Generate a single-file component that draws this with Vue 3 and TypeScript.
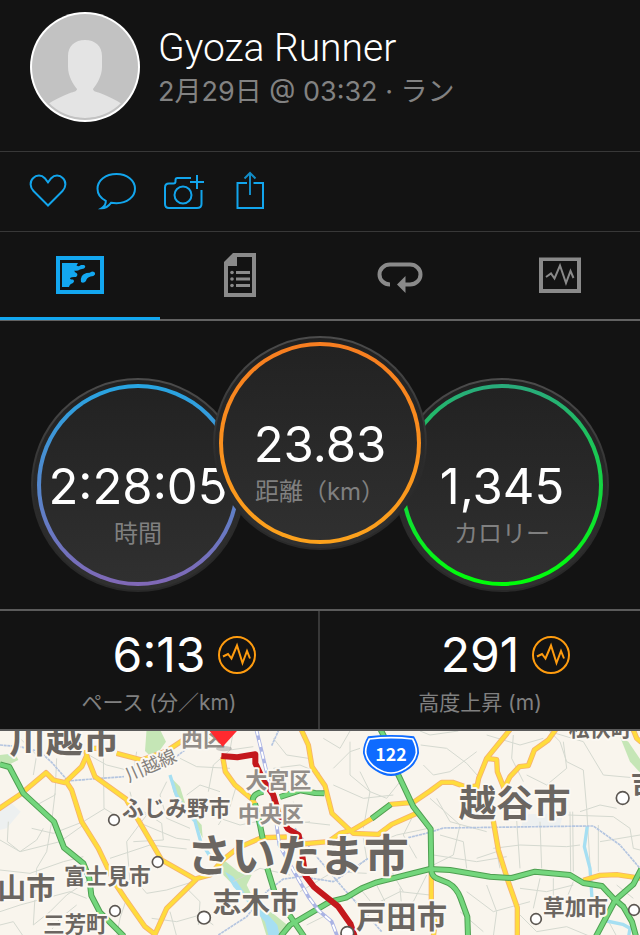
<script setup lang="ts">
import { ref } from 'vue'

interface Dial {
  id: string
  value: string
  label: string
}

interface Stat {
  value: string
  label: string
}

interface Place {
  name: string
  x: number
  y: number
  size: number
  kind: 'city' | 'ward' | 'line'
  angle?: number
}

interface Marker {
  x: number
  y: number
  r: number
}

const dials: Dial[] = [
  { id: 'time', value: '2:28:05', label: '時間' },
  { id: 'distance', value: '23.83', label: '距離（km）' },
  { id: 'calories', value: '1,345', label: 'カロリー' },
]

const stats: Stat[] = [
  { value: '6:13', label: 'ペース (分／km)' },
  { value: '291', label: '高度上昇 (m)' },
]

const tabs = ['マップ', '詳細', 'ラップ', 'グラフ']
const activeTab = ref(0)

const greenRoads: string[] = [
  'M0 118L28 126L70 205L162 290L192 368L250 415L268 460L274 512L300 562L372 634',
  'M1140 10L1160 50L1195 150L1240 245L1292 312L1294 435Q1294 452 1310 460L1345 474Q1370 488 1382 520L1402 575L1404 634',
  'M842 634L870 600L900 583L990 530L1038 518L1085 490L1130 472L1290 432L1350 435L1470 455L1535 459L1605 440L1710 450L1750 474L1806 483L1840 520L1870 545L1896 590L1908 634',
  'M1788 634L1846 525L1900 478L1924 432',
  'M758 225Q760 205 790 200',
  'M765 235L780 300L788 340',
  'M802 430L825 505',
  'M868 570L912 634',
  'M840 216L900 196L945 204L973 205',
]

const yellowRoads: string[] = [
  'M-4 252L65 205L138 143L160 165L195 173L245 125L260 92L258 75',
  'M260 92L285 155L378 222L412 280L485 405L585 462L630 450L668 405L715 368L785 338L860 336',
  'M200 172L215 195L245 290L295 370L345 475L375 520L435 605L465 628L500 550L590 462',
  'M350 85L425 105L500 78L550 45L640 40',
  'M258 70L300 70',
  'M902 10L925 60L936 125L975 182L996 265L1060 325L1135 328L1175 298L1252 264',
  'M668 95L676 140L705 180L758 224L770 250',
  'M905 357L985 350L1020 325L1058 315L1115 281L1172 238L1240 232L1290 198L1325 172L1358 172L1400 187L1435 182',
  'M1530 14L1460 100L1436 160L1430 190M1460 100L1490 104L1492 140L1512 190',
  'M1667 14L1645 45L1603 75L1585 122L1558 125L1530 155L1510 195',
  'M1480 288L1495 375L1524 468L1552 548L1552 634',
  'M1294 440L1294 560L1306 590L1300 634',
  'M1750 466L1800 451L1850 449L1924 460',
  'M1898 10L1910 40L1924 52',
]

const minorRoads: string[] = [
  'M165 205L155 290L140 380L110 430L100 600M95 310L160 325L250 290L315 250M310 90L312 250L345 270',
  'M25 290L22 350L60 380L180 350L250 300M0 345L60 380L110 345L130 310M0 435L90 445L190 410L250 395',
  'M170 100L165 210L110 240M60 40L110 90L100 150M240 75L320 120L400 140L410 80',
  'M390 200L400 240L485 295L490 345L400 350M410 290L530 340L570 345M380 240L440 270L380 350L390 470',
  'M330 400L450 360L560 372M260 470L200 510L150 560L100 600M0 560L60 540L210 500L260 520',
  'M410 470L440 505L500 495L580 470M380 520L360 580L350 634M230 540L180 580L140 634M0 600L40 590L70 634',
  'M500 170L480 210L500 280L570 310M540 100L590 125L690 130M560 210L600 180L660 200',
  'M455 580L530 590L600 570L640 600M510 560L530 634M560 490L600 530L595 600',
  'M700 18L690 75L640 120L625 200M690 75L760 65M655 300L690 245L710 180M630 270L720 300L770 290',
  'M820 40L860 90L925 100M820 130L900 120L960 145M970 40L1020 70L1050 18M1000 130L1050 80L1080 70',
  'M1050 50L1050 150L1110 200L1090 310M1000 180L1090 220L1180 210M1080 140L1110 200L1160 220L1200 170',
  'M1140 350L1190 330L1285 310M1090 340L1100 400L1060 440M1150 360L1180 450L1210 500M1240 270L1210 330L1250 400',
  'M900 500L1000 440L1100 445M880 230L900 290L990 300M830 260L860 300L930 290M700 470L780 430L870 450',
  'M1080 490L1120 540L1200 500L1290 510M1130 480L1170 560L1240 530L1280 450M1200 490L1210 600M920 600L980 570',
  'M1262 60L1340 70L1400 115L1440 160M1260 18L1290 30L1375 18M1270 120L1300 150L1350 140L1430 80',
  'M1290 220L1380 300L1360 390L1300 420M1320 330L1390 350L1400 430M1310 220L1350 290L1460 320M1300 390L1430 410L1520 395',
  'M1540 30L1535 100L1570 170M1460 30L1560 60L1630 40M1580 150L1640 180L1700 130L1690 50',
  'M1640 10L1680 50L1700 110L1750 135L1760 250L1770 420M1740 260L1800 240L1850 250M1650 20L1750 50L1810 150L1920 160',
  'M1710 260L1712 440M1718 260L1720 440M1795 300L1795 440M1705 270L1840 275L1890 310L1900 370L1920 375',
  'M1480 370L1560 360L1700 365L1740 360M1550 285L1560 430M1620 290L1625 430M1430 400L1490 380L1500 430M1800 350L1920 330',
  'M1460 480L1490 560L1480 634M1400 500L1480 560L1590 530M1560 490L1640 500L1720 480M1660 460L1660 520M1380 560L1450 620',
  'M1560 570L1610 620L1700 605L1770 634M1720 470L1700 520M1620 460L1600 550M1850 480L1900 520M1810 560L1850 634',
]

const railLines: string[] = [
  'M0 60L60 65L120 80L155 112L204 168L300 160L372 155M522 100L555 75',
  'M815 62L835 18M655 630L740 575L800 500L850 462L905 455L1000 470L1105 400',
  'M885 310L950 395L1030 490L1080 545L1145 620',
  'M1225 338L1290 322L1330 309L1760 303L1780 303L1860 360L1920 430',
]

const mainRail = 'M768 10L784 75L802 150L822 240L838 360L870 418L925 515L955 556L995 590L1012 634'

const water: string[] = [
  'M510 150L528 208L560 262L585 288L602 350L628 390',
  'M1762 303L1753 365L1770 430L1776 520',
  'M1820 588L1868 598L1890 610L1886 634',
]

const route = 'M664 93L712 97L766 88L766 115L792 170L820 210L836 265L864 312L896 330L908 400L916 452L942 486L1015 545L1052 598L1064 634'

const markers: Marker[] = [
  { x: 342, y: 285, r: 16 },
  { x: 473, y: 411, r: 16 },
  { x: 345, y: 558, r: 16 },
  { x: 612, y: 578, r: 19 },
  { x: 1042, y: 624, r: 19 },
  { x: 1868, y: 219, r: 19 },
  { x: 1608, y: 582, r: 16 },
  { x: 1902, y: 555, r: 16 },
]

const places: Place[] = [
  { name: '川越市', x: 28, y: 84, size: 110, kind: 'city' },
  { name: '川越線', x: 386, y: 172, size: 54, kind: 'line', angle: -24 },
  { name: '西区', x: 543, y: 63, size: 66, kind: 'ward' },
  { name: 'ふじみ野市', x: 366, y: 272, size: 65, kind: 'city' },
  { name: '富士見市', x: 192, y: 477, size: 65, kind: 'city' },
  { name: '山市', x: -8, y: 522, size: 87, kind: 'city' },
  { name: '三芳町', x: 130, y: 622, size: 64, kind: 'city' },
  { name: '大宮区', x: 736, y: 190, size: 66, kind: 'ward' },
  { name: '中央区', x: 713, y: 291, size: 66, kind: 'ward' },
  { name: 'さいたま市', x: 560, y: 442, size: 134, kind: 'city' },
  { name: '志木市', x: 638, y: 565, size: 86, kind: 'city' },
  { name: '戸田市', x: 1068, y: 609, size: 91, kind: 'city' },
  { name: '越谷市', x: 1376, y: 277, size: 112, kind: 'city' },
  { name: '松伏町', x: 1706, y: 34, size: 63, kind: 'city' },
  { name: '吉', x: 1892, y: 203, size: 80, kind: 'city' },
  { name: '草加市', x: 1629, y: 570, size: 65, kind: 'city' },
]
</script>

<template>
  <main class="activity">
    <header class="profile">
      <svg class="avatar" viewBox="0 0 110 110" role="img" aria-label="Gyoza Runner">
        <defs>
          <clipPath id="avatar-clip"><circle cx="55" cy="55" r="51" /></clipPath>
        </defs>
        <circle cx="55" cy="55" r="55" fill="#fff" />
        <circle cx="55" cy="55" r="53" fill="#c2c2c2" />
        <path
          clip-path="url(#avatar-clip)"
          fill="#e4e4e4"
          d="M55 28C45 28 38 34 38 44V55C38 64 43 72 47 77C47 79 44 80 40 81C32 84 24 88 18 92C28 102 41 106 55 106S82 102 92 92C86 88 78 84 70 81C66 80 63 79 63 77C67 72 72 64 72 55V44C72 34 65 28 55 28Z"
        />
      </svg>
      <div class="who">
        <h1 class="name">Gyoza Runner</h1>
        <p class="when">2月29日 @ 03:32 · ラン</p>
      </div>
    </header>

    <div class="actions">
      <button type="button" class="action" aria-label="いいね">
        <svg viewBox="0 0 40 40">
          <path d="M20 34.500L5.500 20C2 16.500 1.500 10.500 5 7.200C8.500 3.700 13.500 3.700 16.800 7.200L20 11.300L23.200 7.200C26.500 3.700 31.500 3.700 35 7.200C38.500 10.500 38 16.500 34.500 20Z" />
        </svg>
      </button>
      <button type="button" class="action" aria-label="コメント">
        <svg viewBox="0 0 40 40">
          <path d="M15 31.800C17 32.100 18.500 32.200 20.500 32.200C31 32.200 39 26 39 17.800C39 9.400 31 3 20.500 3C9.500 3 1.500 9.400 1.500 17.800C1.500 23 4.500 27.200 9.800 29.800C10 33 8.500 35.500 5.500 37.300C9.500 37.300 12.500 35.200 15 31.800Z" />
        </svg>
      </button>
      <button type="button" class="action" aria-label="写真を追加">
        <svg viewBox="0 0 40 40">
          <path d="M27 7H13.500Q11.500 7 11.500 9V10.500Q11.500 12.500 9.500 12.500H5Q1 12.500 1 16.500V33Q1 37 5 37H33Q37.500 37 37.500 33V19M26 11H40M33 4V18" />
          <circle cx="19" cy="24" r="8.500" />
        </svg>
      </button>
      <button type="button" class="action" aria-label="共有">
        <svg viewBox="0 0 40 40">
          <path d="M15 12H5.500V37H31V12H21.500" />
          <path class="arrow" d="M18 24V2M12.500 7.500L18 2L23.500 7.500" />
        </svg>
      </button>
    </div>

    <nav class="tabs" role="tablist">
      <button
        v-for="(tab, i) in tabs"
        :key="tab"
        type="button"
        role="tab"
        class="tab"
        :class="{ active: i === activeTab }"
        :aria-label="tab"
        :aria-selected="i === activeTab"
        @click="activeTab = i"
      >
        <svg v-if="i === 0" viewBox="0 0 48 48">
          <path fill-rule="evenodd" d="M0 5H48V43H0ZM4 9V39H44V9Z" />
          <path d="M6 12H22L20.500 14.500Q23 16 25 14H28Q30.500 15.500 28 17.500L24 18.500Q21 20.500 18.500 19.500Q18 21 20.500 22Q22.500 24 20 26Q16 25.500 14 27Q14 28.500 17 28.500Q19 30 17 32Q13.500 33 13 36H6Z" />
          <path d="M25 31Q24 23.500 30.500 22Q34 22 36 20.500Q39.500 20.500 39 23.500Q38 25.500 34.500 25.500Q30.500 26.500 30 30Q27.500 33 25 31Z" />
        </svg>
        <svg v-else-if="i === 1" viewBox="0 0 48 48">
          <path fill-rule="evenodd" d="M17 2H40V46H8V11ZM21 6V15H12V42H36V6Z" />
          <path d="M20 20H34V23H20ZM20 26.500H34V29.500H20ZM20 33H34V36H20Z" />
          <circle cx="16" cy="21.500" r="1.800" /><circle cx="16" cy="28" r="1.800" /><circle cx="16" cy="34.500" r="1.800" />
        </svg>
        <svg v-else-if="i === 2" viewBox="0 0 48 48">
          <path class="line thick" d="M14 33.500C8 33.500 3.500 29 3.500 23.500S8 13.500 14 13.500H34C40 13.500 44.500 18 44.500 23.500S40 33.500 34 33.500H26" />
          <path d="M21 33.500L29.500 25V42Z" />
        </svg>
        <svg v-else viewBox="0 0 48 48">
          <path fill-rule="evenodd" d="M3 6.500H45V42H3ZM7 10V38H41V10Z" />
          <path class="line" d="M10 26L15 22.500L18.500 27.500L24 14.500L30 32L34.500 20L37.500 27" />
        </svg>
      </button>
    </nav>

    <section class="dials">
      <div v-for="dial in dials" :key="dial.id" class="dial" :class="dial.id">
        <div class="ring">
          <strong class="dial-value">{{ dial.value }}</strong>
          <span class="dial-label">{{ dial.label }}</span>
        </div>
      </div>
    </section>

    <section class="stats">
      <div v-for="stat in stats" :key="stat.label" class="stat">
        <div class="reading">
          <strong class="stat-value">{{ stat.value }}</strong>
          <button type="button" class="graph" aria-label="グラフを表示">
            <svg viewBox="0 0 38 38">
              <circle cx="19" cy="19" r="18" />
              <path d="M5 20.500L10 18L13.500 22.500L19 9.500L24.500 27L29 15L32 22.500" />
            </svg>
          </button>
        </div>
        <span class="stat-label">{{ stat.label }}</span>
      </div>
    </section>

    <svg class="map" viewBox="0 18 1920 612" role="img" aria-label="ルートマップ">
      <rect x="0" y="0" width="1920" height="640" fill="#f9f5ed" />

      <g class="land">
        <path fill="#edf0f0" d="M0 240L30 230L62 260L20 310L0 315ZM1570 268L1690 265L1680 303L1565 303Z" />
        <path fill="#c5e6b6" d="M440 10H478L498 50L480 75L450 92L435 78ZM0 90L45 85L55 105L20 122L0 115ZM510 155L540 185L560 250L605 300L608 340L585 290L545 245L520 200Z" />
        <path fill="#c5e6b6" d="M665 400L715 440L755 450L740 480L765 530L825 570L862 600L845 634H800L780 570L720 500L670 450Z" />
        <path fill="#c5e6b6" d="M1860 35L1885 50L1922 105V145L1890 110Z" />
        <path fill="#a6dff2" d="M675 440L700 455L738 510L760 520L805 570L832 600L840 634H806L795 590L755 545L700 485Z" />
      </g>
      <g class="minor"><path v-for="d in minorRoads" :key="d" :d="d" /></g>
      <g class="water"><path v-for="d in water" :key="d" :d="d" /></g>
      <g class="rail"><path v-for="d in railLines" :key="d" :d="d" /></g>
      <g class="yellow-case"><path v-for="d in yellowRoads" :key="d" :d="d" /></g>
      <g class="yellow"><path v-for="d in yellowRoads" :key="d" :d="d" /></g>
      <g class="green-case"><path v-for="d in greenRoads" :key="d" :d="d" /><path d="M1115 281L1172 238" /></g>
      <g class="green"><path v-for="d in greenRoads" :key="d" :d="d" /><path d="M1115 281L1172 238" /></g>
      <path class="main-rail-case" :d="mainRail" />
      <path class="main-rail" :d="mainRail" />
      <path class="route" :d="route" />

      <circle v-for="m in markers" :key="`${m.x}-${m.y}`" class="marker" :cx="m.x" :cy="m.y" :r="m.r" />

      <text
        v-for="p in places"
        :key="p.name"
        :class="p.kind"
        :x="p.x"
        :y="p.y"
        :font-size="p.size"
        :transform="p.angle ? `rotate(${p.angle} ${p.x} ${p.y})` : undefined"
      >{{ p.name }}</text>

      <ellipse cx="672" cy="71" rx="24" ry="8" fill="#777" opacity=".35" />
      <path fill="#ff2a2f" d="M622 10H718L668 65Z" />

      <path fill="#0f6bff" d="M1104 34Q1173 26 1242 34Q1258 60 1257 85Q1250 120 1218 138Q1173 168 1128 138Q1096 120 1089 85Q1088 60 1104 34Z" />
      <path fill="none" stroke="#fff" stroke-width="5" d="M1108 42Q1173 34 1238 42Q1250 64 1249 84Q1243 114 1214 131Q1173 157 1132 131Q1103 114 1097 84Q1096 64 1108 42Z" />
      <text class="shield" x="1173" y="107" font-size="53">122</text>
    </svg>
  </main>
</template>

<style>
body {
  margin: 0;
  background: #131313;
}
</style>

<style scoped>
.activity {
  min-height: 100vh;
  overflow: hidden;
  background: #131313;
  color: #fff;
  font-family: Inter, "Noto Sans CJK JP", sans-serif;
}

button {
  padding: 0;
  border: 0;
  background: none;
  color: inherit;
  cursor: pointer;
}

svg {
  display: block;
}

.profile {
  display: flex;
  gap: 18px;
  padding: 12px 30px 29px;
  border-bottom: 1px solid #383838;
}

.avatar {
  flex: none;
  width: 110px;
  height: 110px;
}

.who {
  padding-top: 12px;
}

.name {
  margin: 0;
  font-family: Roboto, sans-serif;
  font-size: 39px;
  font-weight: 300;
  line-height: 48px;
}

.when {
  margin: 0;
  color: #828282;
  font-size: 27px;
  font-weight: 400;
  line-height: 40px;
}

.actions {
  display: flex;
  gap: 28px;
  padding: 19px 28px 20px;
  border-bottom: 1px solid #383838;
}

.action svg {
  width: 40px;
  height: 40px;
  fill: none;
  stroke: #12a5ec;
  stroke-width: 2;
}

.action .arrow {
  stroke: #128cc6;
}

.tabs {
  display: grid;
  grid-template-columns: repeat(4, 1fr);
  border-bottom: 2px solid #626262;
}

.tab {
  position: relative;
  display: flex;
  justify-content: center;
  padding: 19px 0 20px;
  color: #8a8a8a;
}

.tab.active {
  color: #13a7f0;
}

.tab.active::after {
  content: "";
  position: absolute;
  right: 0;
  bottom: -1px;
  left: 0;
  height: 3px;
  background: #13a7f0;
}

.tab svg {
  width: 48px;
  height: 48px;
  fill: currentColor;
}

.tab .line {
  fill: none;
  stroke: currentColor;
  stroke-width: 2;
}

.tab .thick {
  stroke-width: 4;
}

.dials {
  display: flex;
  justify-content: center;
  padding: 15px 0 17px;
}

.dial {
  box-sizing: border-box;
  flex: none;
  width: 214px;
  height: 214px;
  margin-top: 42px;
  padding: 4px;
  border: 2px solid transparent;
  border-radius: 50%;
  background:
    linear-gradient(#212121, #303030) padding-box,
    linear-gradient(#4c4c4c, #2b2b2b 60%, #292929) border-box;
}

.distance {
  z-index: 1;
  margin: 0 -32px 42px;
}

.ring {
  box-sizing: border-box;
  display: flex;
  flex-direction: column;
  align-items: center;
  width: 202px;
  height: 202px;
  padding-top: 69px;
  border: 4px solid transparent;
  border-radius: 50%;
  background:
    linear-gradient(#222, #303030) padding-box,
    linear-gradient(var(--from), var(--to)) border-box;
  white-space: nowrap;
}

.time {
  --from: #27a5e2;
  --to: #8168b6;
}

.distance {
  --from: #f77d20;
  --to: #fca21c;
}

.calories {
  --from: #29ab7c;
  --to: #00ff08;
}

.dial-value {
  font-size: 49px;
  font-weight: 400;
  line-height: 60px;
}

.dial-label {
  color: #808080;
  font-size: 24px;
  font-weight: 400;
  line-height: 34px;
}

.stats {
  display: grid;
  grid-template-columns: 1fr 1fr;
  border-top: 2px solid #5b5b5b;
  border-bottom: 2px solid #5b5b5b;
}

.stat {
  display: flex;
  flex-direction: column;
  align-items: center;
  padding: 15px 0 7px;
}

.stat:first-child {
  border-right: 2px solid #383838;
}

.reading {
  display: grid;
  grid-template-columns: 1fr auto 1fr;
  align-items: center;
  gap: 13px;
  width: 100%;
}

.stat-value {
  grid-column: 2;
  font-size: 48px;
  font-weight: 400;
  line-height: 58px;
}

.graph {
  justify-self: start;
}

.graph svg {
  width: 38px;
  height: 38px;
  fill: none;
  stroke: #ff9c0f;
  stroke-width: 2;
}

.stat-label {
  color: #808080;
  font-size: 21px;
  font-weight: 400;
  line-height: 38px;
}

.map {
  width: 100%;
  height: auto;
  font-family: "Noto Sans CJK JP", sans-serif;
}

.map g {
  fill: none;
  stroke-linejoin: round;
}

.minor {
  stroke: #d5d9d0;
  stroke-width: 3;
}

.water {
  stroke: #a6dff2;
  stroke-width: 10;
}

.rail {
  stroke: #b4c5e0;
  stroke-width: 5;
  stroke-dasharray: 9 2;
}

.yellow-case {
  stroke: #f6b26f;
  stroke-width: 16;
}

.yellow {
  stroke: #ffdc3c;
  stroke-width: 11;
}

.green-case {
  stroke: #4f9f51;
  stroke-width: 18;
}

.green {
  stroke: #73d67c;
  stroke-width: 12;
}

.main-rail-case {
  fill: none;
  stroke: #aab3e4;
  stroke-width: 11;
}

.main-rail {
  fill: none;
  stroke: #fff;
  stroke-width: 6;
  stroke-dasharray: 22 14;
}

.route {
  fill: none;
  stroke: #c4181c;
  stroke-width: 18;
  stroke-linejoin: round;
}

.marker {
  fill: #fff;
  stroke: #5b5651;
  stroke-width: 5;
}

.map text {
  stroke: #fbf8f2;
  stroke-width: 12;
  stroke-linejoin: round;
  paint-order: stroke;
}

.map .city {
  fill: #6b6661;
  font-weight: 700;
}

.map .ward {
  fill: #938e89;
  font-weight: 700;
}

.map .line {
  fill: #85817c;
  font-weight: 400;
}

.map .shield {
  fill: #fff;
  stroke: none;
  font-weight: 700;
  text-anchor: middle;
}
</style>
